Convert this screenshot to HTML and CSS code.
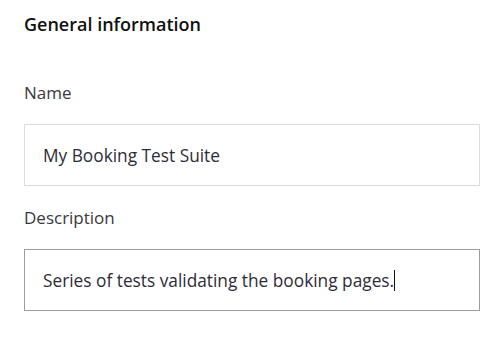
FILE: index.html
```html
<!DOCTYPE html>
<html>
<head>
	<title>General information</title>
	<link rel="stylesheet" href="styles.css">
</head>
<body>
	<form class="panel">
		<h2 class="panelTitle">General information</h2>
		<div class="field">
			<label class="fieldLabel" for="name">Name</label>
			<div class="fieldBox">My Booking Test Suite</div>
		</div>
		<div class="field">
			<label class="fieldLabel" for="description">Description</label>
			<div class="fieldBox focused">Series of tests validating the booking pages.<span class="caret"></span></div>
		</div>
	</form>
</body>
</html>
```

FILE: styles.css
```css
body {
	margin: 0;
	background: #fff;
	font-family: "Open Sans", Lato, sans-serif;
	color: #2e2c38;
}

.panel {
	width: 456px;
	padding: 11px 0 0 24px;
}

.panelTitle {
	margin: 0 0 45px 0;
	font-size: 18px;
	font-weight: 600;
	color: #111;
	line-height: 26px;
}

.field {
	display: flex;
	flex-direction: column;
	margin-bottom: 21px;
}

.fieldLabel {
	font-size: 17px;
	line-height: 22px;
	margin-bottom: 20px;
	color: #3a3840;
}

.fieldBox {
	height: 62px;
	box-sizing: border-box;
	border: 1px solid #dcdae4;
	padding: 0 18px;
	display: flex;
	align-items: center;
	font-size: 17.3px;
}

.fieldBox.focused {
	border-color: #9e9ca6;
}

.caret {
	display: inline-block;
	width: 1px;
	height: 21px;
	background: #111;
}
```
